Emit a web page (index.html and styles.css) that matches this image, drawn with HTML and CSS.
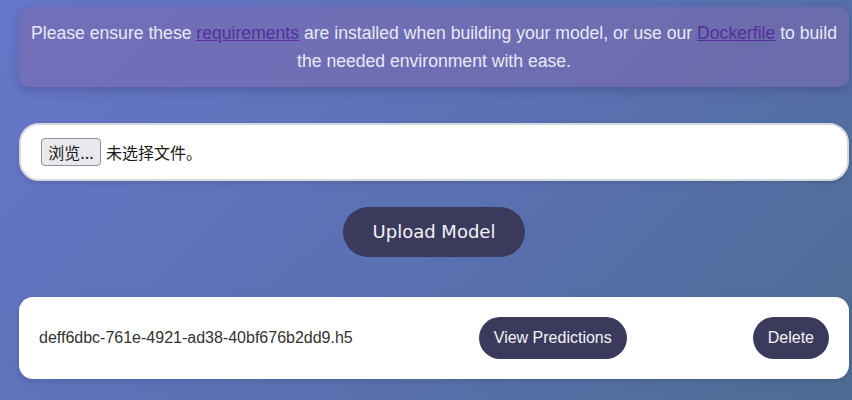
FILE: index.html
```html
<!DOCTYPE html>
<html lang="zh">
<head>
<meta charset="utf-8">
<title>Upload Model</title>
<link rel="stylesheet" href="styles.css">
</head>
<body>
<main class="page">
  <div class="notice">
    Please ensure these <a href="#" class="link">requirements</a> are installed when building your model, or use our <a href="#" class="link">Dockerfile</a> to build the needed environment with ease.
  </div>
  <form class="upload-form">
    <label class="file-box">
      <span class="file-btn">浏览...</span>
      <span class="file-text">未选择文件。</span>
    </label>
    <button type="button" class="upload-btn">Upload Model</button>
  </form>
  <div class="model-card">
    <span class="model-name">deff6dbc-761e-4921-ad38-40bf676b2dd9.h5</span>
    <button type="button" class="pill-btn">View Predictions</button>
    <button type="button" class="pill-btn">Delete</button>
  </div>
</main>
</body>
</html>
```
FILE: styles.css
```css
html, body {
  margin: 0;
  height: 100%;
}
body {
  background: linear-gradient(135deg, #6676c9 0%, #5a71b4 50%, #4d6c93 100%);
  font-family: "Liberation Sans", Arial, sans-serif;
  overflow: hidden;
}
.page {
  width: 830px;
  padding: 7px 0 0 19px;
  display: flex;
  flex-direction: column;
}
.notice {
  background: rgba(125, 105, 175, 0.55);
  border-radius: 10px;
  box-shadow: 0 4px 10px rgba(40, 40, 90, 0.25);
  color: #e8e8f6;
  font-size: 17.6px;
  line-height: 28px;
  text-align: center;
  padding: 12px 6px;
}
.link {
  color: #55309a;
}
.upload-form {
  display: flex;
  flex-direction: column;
  align-items: center;
  margin-top: 36px;
}
.file-box {
  align-self: stretch;
  display: flex;
  align-items: center;
  background: #fff;
  border: 2px solid #d6d8e0;
  border-radius: 20px;
  padding: 13px 20px;
  box-shadow: 0 2px 4px rgba(0, 0, 0, 0.12);
  font-family: "Noto Sans CJK SC", "Liberation Sans", sans-serif;
  font-size: 16px;
  color: #1a1a1a;
}
.file-btn {
  box-sizing: border-box;
  width: 60px;
  height: 28px;
  display: flex;
  align-items: center;
  justify-content: center;
  background: #e9e9ed;
  border: 1px solid #8f8f9d;
  border-radius: 4px;
  margin-right: 5px;
  font-size: 16px;
}
.upload-btn {
  margin-top: 26px;
  background: #3c3a5c;
  color: #f2f2f8;
  border: none;
  border-radius: 25px;
  padding: 15px 30px;
  font-family: "DejaVu Sans", sans-serif;
  font-size: 18px;
  line-height: 20px;
}
.model-card {
  margin-top: 40px;
  background: #fff;
  border-radius: 14px;
  padding: 20px;
  display: flex;
  align-items: center;
  justify-content: space-between;
  box-shadow: 0 2px 6px rgba(0, 0, 0, 0.12);
}
.model-name {
  color: #333;
  font-size: 16px;
}
.pill-btn {
  background: #3c3a5c;
  color: #f2f2f8;
  border: none;
  border-radius: 21px;
  padding: 11px 15px;
  font-family: "Liberation Sans", Arial, sans-serif;
  font-size: 16px;
  line-height: 20px;
}
```
